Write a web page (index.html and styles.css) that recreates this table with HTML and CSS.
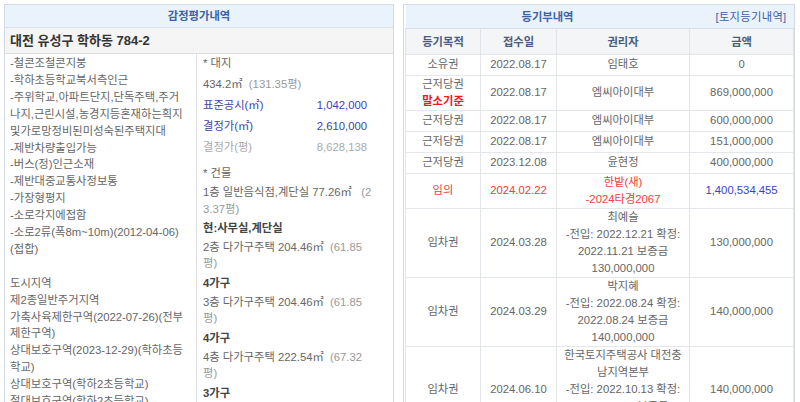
FILE: index.html
```html
<!DOCTYPE html>
<html lang="ko">
<head>
<meta charset="utf-8">
<title>감정평가내역 / 등기부내역</title>
<link rel="stylesheet" href="styles.css">
</head>
<body>
<div class="page">
  <section class="panel appraisal">
    <div class="panel-title">감정평가내역</div>
    <div class="address">대전 유성구 학하동 784-2</div>
    <div class="apr-body">
      <div class="apr-left">
        <div class="lines">-철콘조철콘지붕<br>-학하초등학교북서측인근<br>-주위학교,아파트단지,단독주택,주거<br>나지,근린시설,농경지등혼재하는획지<br>및가로망정비된미성숙된주택지대<br>-제반차량출입가능<br>-버스(정)인근소재<br>-제반대중교통사정보통<br>-가장형평지<br>-소로각지에접함<br>-소로2류(폭8m~10m)(2012-04-06)<br>(접합)</div>
        <div class="lines zone">도시지역<br>제2종일반주거지역<br>가축사육제한구역(2022-07-26)(전부<br>제한구역)<br>상대보호구역(2023-12-29)(학하초등<br>학교)<br>상대보호구역(학하2초등학교)<br>절대보호구역(학하2초등학교)</div>
      </div>
      <div class="apr-right">
        <div class="land">
          <div class="item">* 대지</div>
          <div class="item">434.2㎡ &nbsp;<span class="muted">(131.35평)</span></div>
          <div class="item kv blue"><span>표준공시(㎡)</span><span>1,042,000</span></div>
          <div class="item kv blue"><span>결정가(㎡)</span><span>2,610,000</span></div>
          <div class="item kv light"><span>결정가(평)</span><span>8,628,138</span></div>
        </div>
        <div class="bldg">
          <div class="item">* 건물</div>
          <div class="item">1층 일반음식점,계단실 77.26㎡ &nbsp;&nbsp;<span class="muted">(2<br>3.37평)</span></div>
          <div class="item strong">현:사무실,계단실</div>
          <div class="item">2층 다가구주택 204.46㎡ &nbsp;<span class="muted">(61.85<br>평)</span></div>
          <div class="item strong">4가구</div>
          <div class="item">3층 다가구주택 204.46㎡ &nbsp;<span class="muted">(61.85<br>평)</span></div>
          <div class="item strong">4가구</div>
          <div class="item">4층 다가구주택 222.54㎡ &nbsp;<span class="muted">(67.32<br>평)</span></div>
          <div class="item strong">3가구</div>
        </div>
      </div>
    </div>
  </section>

  <section class="panel registry">
    <table class="reg">
      <colgroup><col class="c1"><col class="c2"><col class="c3"><col class="c4"></colgroup>
      <thead>
        <tr class="title-row">
          <th colspan="3" class="title">등기부내역</th>
          <th class="link">[토지등기내역]</th>
        </tr>
        <tr class="head-row">
          <th>등기목적</th><th>접수일</th><th>권리자</th><th>금액</th>
        </tr>
      </thead>
      <tbody>
        <tr><td>소유권</td><td>2022.08.17</td><td>임태호</td><td>0</td></tr>
        <tr><td>근저당권<br><b class="red">말소기준</b></td><td>2022.08.17</td><td>엠씨아이대부</td><td>869,000,000</td></tr>
        <tr><td>근저당권</td><td>2022.08.17</td><td>엠씨아이대부</td><td>600,000,000</td></tr>
        <tr><td>근저당권</td><td>2022.08.17</td><td>엠씨아이대부</td><td>151,000,000</td></tr>
        <tr><td>근저당권</td><td>2023.12.08</td><td>윤현정</td><td>400,000,000</td></tr>
        <tr class="red"><td>임의</td><td>2024.02.22</td><td>한밭(새)<br>-2024타경2067</td><td class="amount-blue">1,400,534,455</td></tr>
        <tr><td>임차권</td><td>2024.03.28</td><td>최예슬<br>-전입: 2022.12.21 확정:<br>2022.11.21 보증금<br>130,000,000</td><td>130,000,000</td></tr>
        <tr><td>임차권</td><td>2024.03.29</td><td>박지혜<br>-전입: 2022.08.24 확정:<br>2022.08.24 보증금<br>140,000,000</td><td>140,000,000</td></tr>
        <tr><td>임차권</td><td>2024.06.10</td><td>한국토지주택공사 대전충<br>남지역본부<br>-전입: 2022.10.13 확정:<br>2022.09.02 보증금<br>140,000,000</td><td>140,000,000</td></tr>
      </tbody>
    </table>
  </section>
</div>
</body>
</html>
```

FILE: styles.css
```css
* { box-sizing: border-box; }
html, body {
  margin: 0;
  padding: 0;
  background: #fff;
  height: 402px;
  overflow: hidden;
}
body {
  font-family: "Liberation Sans", "Noto Sans CJK KR", sans-serif;
  font-size: 11.3px;
  color: #666;
}
.page {
  display: flex;
  align-items: flex-start;
  gap: 9px;
  padding: 4px 0 0 4px;
}
.panel {
  border: 1px solid #d3d9e3;
  background: #fff;
}

/* ---------- left: appraisal ---------- */
.appraisal { width: 390px; }
.panel-title {
  height: 23px;
  line-height: 22px;
  background: #eaf2fc;
  border-bottom: 1px solid #d8dfe9;
  text-align: center;
  color: #3b62a6;
  font-weight: bold;
}
.address {
  height: 26px;
  line-height: 25px;
  padding-left: 5px;
  background: #f5f5f5;
  border-bottom: 1px solid #dedede;
  font-size: 13px;
  font-weight: bold;
  color: #333;
}
.apr-body {
  display: flex;
  align-items: stretch;
}
.apr-left {
  width: 192px;
  padding: 1px 0 0 5px;
  border-right: 1px solid #e2e2e2;
  line-height: 16.9px;
  white-space: nowrap;
  color: #666;
}
.zone { margin-top: 16.9px; }
.apr-right {
  flex: 1;
  padding: 1px 0 0 6px;
  white-space: nowrap;
  color: #666;
}
.land { padding-bottom: 5px; }
.land .item {
  line-height: 17px;
  margin-bottom: 4px;
}
.bldg .item {
  line-height: 16.3px;
  margin-bottom: 3px;
}
.kv {
  display: flex;
  justify-content: space-between;
  width: 164px;
}
.blue { color: #3d45a8; }
.light { color: #aaa; }
.muted { color: #999; }
.strong { font-weight: bold; color: #444; }

/* ---------- right: registry ---------- */
.registry {
  width: 392px;
  padding: 0 1px;
}
.reg {
  width: 388px;
  table-layout: fixed;
  border-collapse: collapse;
}
.c1 { width: 75px; }
.c2 { width: 76px; }
.c3 { width: 133px; }
.c4 { width: 104px; }
.title-row th {
  height: 23px;
  background: #eaf2fc;
  color: #3b62a6;
  font-weight: bold;
  padding: 0;
  border-bottom: 1px solid #d8dfe9;
}
.title-row .link {
  text-align: right;
  padding-right: 7px;
  letter-spacing: 0.3px;
  font-weight: normal;
  color: #3b62a6;
}
.head-row th {
  height: 26px;
  background: #f4f5f7;
  color: #4b5d80;
  font-weight: bold;
  border: 1px solid #e0e4ea;
  padding: 0;
}
.reg td {
  height: 21px;
  padding: 0;
  text-align: center;
  vertical-align: middle;
  line-height: 17px;
  border: 1px solid #e3e6ea;
  white-space: nowrap;
  color: #666;
}
.red, .reg tr.red td { color: #f23b3b; }
b.red { color: #f01818; font-weight: bold; }
.reg tr.red td.amount-blue { color: #3b3bdc; }
```
